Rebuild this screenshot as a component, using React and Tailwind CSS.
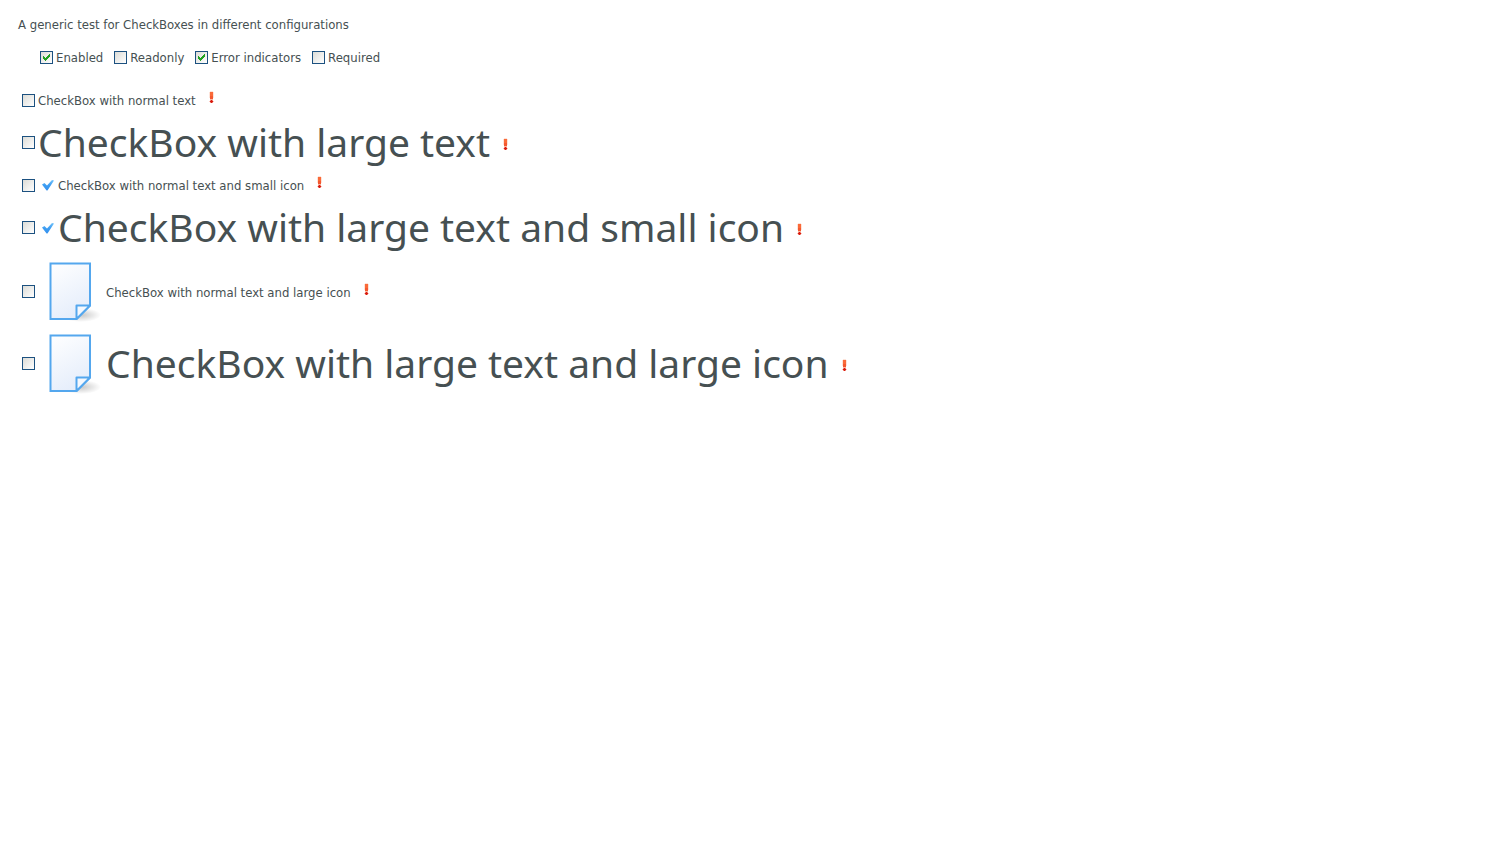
import React from "react";

function CheckControl({ id, defaultChecked = false }) {
  return (
    <span className="relative block size-[13px] shrink-0">
      <input
        id={id}
        type="checkbox"
        defaultChecked={defaultChecked}
        className="peer block size-[13px] appearance-none border border-[#1c5180] bg-linear-to-br from-[#dcdcd7] to-white"
      />
      <svg
        viewBox="0 0 13 13"
        shapeRendering="crispEdges"
        className="pointer-events-none absolute inset-0 hidden size-[13px] peer-checked:block"
        aria-hidden="true"
      >
        <path
          d="M3 5h1v1h1v1h1v-1h1v-1h1v-1h1v-1h1v3h-1v1h-1v1h-1v1h-1v1h-1v-1h-1v-1h-1z"
          fill="#21a121"
        />
      </svg>
    </span>
  );
}

function ErrorMark({ className }) {
  return (
    <svg viewBox="0 0 7 14" shapeRendering="crispEdges" className={`h-3.5 w-[7px] shrink-0 ${className}`} role="img" aria-label="Error">
      <path d="M2 0h3v1h-3zM1 1h1v6h-1zM5 1h1v6h-1z" fill="#fde3d9" />
      <rect x="2" y="1" width="3" height="4" fill="#fa6a38" />
      <rect x="2" y="5" width="3" height="3" fill="#f4582f" />
      <rect x="2" y="8" width="3" height="1" fill="#fbb9a4" />
      <rect x="2" y="10" width="3" height="1" fill="#d8190f" />
      <rect x="3" y="9" width="1" height="3" fill="#d8190f" />
      <path d="M2 9h1v1h-1zM4 9h1v1h-1zM2 11h1v1h-1zM4 11h1v1h-1z" fill="#ee8a7c" />
      <path d="M1 10h1v1h-1zM5 10h1v1h-1z" fill="#f9c4bb" />
    </svg>
  );
}

function TickIcon() {
  return (
    <svg viewBox="0 0 16 16" className="size-4 shrink-0" aria-hidden="true">
      <defs>
        <linearGradient id="tick" x1="0" y1="0" x2="0" y2="1">
          <stop offset="0" stopColor="#74c4fa" />
          <stop offset="0.5" stopColor="#3d9df2" />
          <stop offset="1" stopColor="#3590ee" />
        </linearGradient>
      </defs>
      <path d="M2 7.5L4.5 6L7 8.6L12 3L14 3.5L7.8 13Q7 14 6.200 13Z" fill="url(#tick)" />
    </svg>
  );
}

function PageIcon() {
  return (
    <svg viewBox="0 0 64 63" className="h-[63px] w-16 shrink-0" aria-hidden="true">
      <defs>
        <linearGradient id="sheet" x1="0" y1="0" x2="0.4" y2="1">
          <stop offset="0" stopColor="#ffffff" />
          <stop offset="1" stopColor="#e6eefb" />
        </linearGradient>
        <radialGradient id="shade">
          <stop offset="0" stopColor="#000000" stopOpacity="0.22" />
          <stop offset="1" stopColor="#000000" stopOpacity="0" />
        </radialGradient>
      </defs>
      <ellipse cx="41" cy="55" rx="20" ry="7" fill="url(#shade)" />
      <path d="M10.500 3.500H50V45.500L36.500 59H10.500Z" fill="url(#sheet)" stroke="#54a7ee" strokeWidth="2" />
      <path d="M50 45.500H36.500V59Z" fill="#f4f8fe" stroke="#54a7ee" strokeWidth="2" strokeLinejoin="round" />
    </svg>
  );
}

const options = [
  { id: "enabled", label: "Enabled", checked: true },
  { id: "readonly", label: "Readonly", checked: false },
  { id: "errors", label: "Error indicators", checked: true },
  { id: "required", label: "Required", checked: false },
];

const samples = [
  { id: "s1", label: "CheckBox with normal text" },
  { id: "s2", label: "CheckBox with large text", large: true },
  { id: "s3", label: "CheckBox with normal text and small icon", icon: "small" },
  { id: "s4", label: "CheckBox with large text and small icon", large: true, icon: "small" },
  { id: "s5", label: "CheckBox with normal text and large icon", icon: "large" },
  { id: "s6", label: "CheckBox with large text and large icon", large: true, icon: "large" },
];

function Sample({ id, label, large, icon }) {
  return (
    <div className="flex items-center">
      <CheckControl id={id} />
      <label
        htmlFor={id}
        className={`flex items-center gap-0.5 whitespace-nowrap ${icon ? "pl-[5px]" : "pl-[3px]"}`}
      >
        {icon === "small" && <TickIcon />}
        {icon === "large" && <PageIcon />}
        <span
          className={
            large
              ? "pb-0.5 font-['Noto_Sans',sans-serif] text-[39px] leading-[45px]"
              : "pt-0.5 text-[13px] leading-[18px]"
          }
        >
          {label}
        </span>
      </label>
      <ErrorMark className={large ? "ml-3 mt-1" : "ml-3 mb-1"} />
    </div>
  );
}

export default function App() {
  return (
    <main className="min-h-screen bg-white px-[18px] pt-[15px] font-['DejaVu_Sans_Condensed','Open_Sans',sans-serif] text-[13px] leading-5 text-[#465052]">
      <p>A generic test for CheckBoxes in different configurations</p>
      <div className="mt-3 flex flex-wrap gap-x-[11px] pl-[22px]">
        {options.map((o) => (
          <div key={o.id} className="flex items-center gap-[3px]">
            <CheckControl id={o.id} defaultChecked={o.checked} />
            <label htmlFor={o.id} className="pt-0.5 leading-[18px]">
              {o.label}
            </label>
          </div>
        ))}
      </div>
      <div className="mt-[23px] flex flex-col gap-[9px] pl-1">
        {samples.map((s) => (
          <Sample key={s.id} {...s} />
        ))}
      </div>
    </main>
  );
}
